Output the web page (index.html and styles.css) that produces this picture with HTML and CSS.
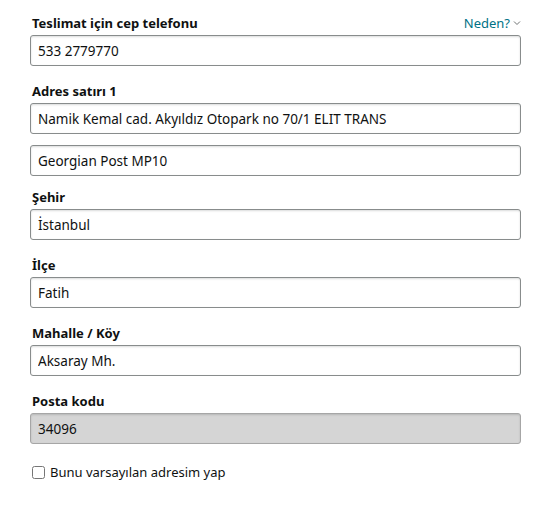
FILE: index.html
```html
<!DOCTYPE html>
<html lang="tr">
<head>
<meta charset="utf-8">
<link rel="stylesheet" href="styles.css">
</head>
<body>
<form class="form">
  <div class="field">
    <div class="label-row">
      <label class="label">Teslimat için cep telefonu</label>
      <span class="why">Neden?<svg class="chev" width="8" height="6" viewBox="0 0 8 6"><path d="M1 1.5 L4 4.5 L7 1.5" fill="none" stroke="#6f7373" stroke-width="1"/></svg></span>
    </div>
    <input class="input" type="text" value="533 2779770">
  </div>
  <div class="field tight">
    <label class="label">Adres satırı 1</label>
    <input class="input" type="text" value="Namik Kemal cad. Akyıldız Otopark no 70/1 ELIT TRANS">
    <input class="input second" type="text" value="Georgian Post MP10">
  </div>
  <div class="field">
    <label class="label">Şehir</label>
    <input class="input" type="text" value="İstanbul">
  </div>
  <div class="field">
    <label class="label">İlçe</label>
    <input class="input" type="text" value="Fatih">
  </div>
  <div class="field">
    <label class="label">Mahalle / Köy</label>
    <input class="input" type="text" value="Aksaray Mh.">
  </div>
  <div class="field">
    <label class="label">Posta kodu</label>
    <input class="input disabled" type="text" value="34096" disabled>
  </div>
  <label class="check">
    <input type="checkbox" class="box">
    <span>Bunu varsayılan adresim yap</span>
  </label>
</form>
</body>
</html>
```
FILE: styles.css
```css
* { box-sizing: border-box; }
html, body { margin: 0; background: #fff; }
body {
  font-family: "Noto Sans", "Open Sans", sans-serif;
  color: #0f1111;
  font-size: 13px;
}
.form {
  width: 491px;
  margin-left: 30px;
  padding-top: 13px;
  display: flex;
  flex-direction: column;
}
.field {
  display: flex;
  flex-direction: column;
  margin-bottom: 15px;
}
.field.tight { margin-bottom: 11px; }
.label-row {
  display: flex;
  justify-content: space-between;
  align-items: center;
}
.label {
  font-weight: 700;
  font-size: 13px;
  line-height: 20px;
  padding-left: 2px;
  margin-bottom: 2px;
}
.why {
  color: #007185;
  font-size: 13px;
  line-height: 20px;
  margin-bottom: 2px;
  display: flex;
  align-items: center;
  gap: 3px;
}
.input {
  height: 31px;
  width: 100%;
  border: 1px solid #888c8c;
  border-radius: 3px;
  box-shadow: 0 1px 2px rgba(15,17,17,.15) inset;
  padding: 0 7px;
  font-family: inherit;
  font-size: 13.5px;
  color: #0f1111;
  background: #fff;
  outline: none;
}
.second { margin-top: 11px; }
.disabled {
  background: #d5d5d5;
  border-color: #a6a6a6;
  color: #0f1111;
  -webkit-text-fill-color: #0f1111;
}
.check {
  display: flex;
  align-items: center;
  gap: 5px;
  margin-top: 3px;
  margin-left: 2px;
  font-size: 13px;
  line-height: 20px;
}
.box {
  margin: 0;
  width: 13px;
  height: 13px;
}
```
